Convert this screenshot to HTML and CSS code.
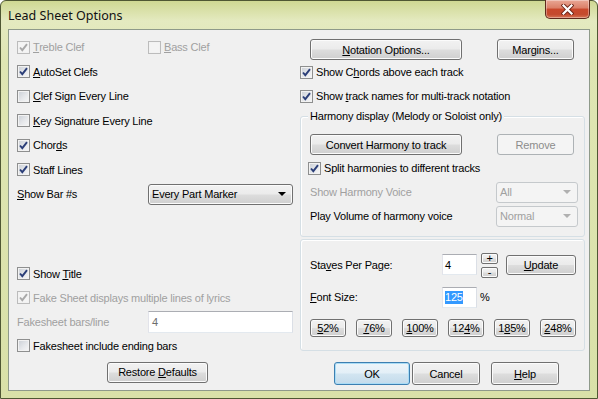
FILE: index.html
```html
<!DOCTYPE html>
<html lang="en">
<head>
    <meta charset="UTF-8">
    <title>Lead Sheet Options</title>
    <link rel="stylesheet" href="styles.css">
</head>
<body>
<div class="window">
    <div class="titlebar">
        <span class="title">Lead Sheet Options</span>
        <div class="close">
            <svg width="13" height="11" viewBox="0 0 13 11">
                <path d="M2.5 1.5 L10.5 9.5 M10.5 1.5 L2.5 9.5" stroke="#6b2416" stroke-width="4" stroke-linecap="square"/>
                <path d="M2.5 1.5 L10.5 9.5 M10.5 1.5 L2.5 9.5" stroke="#fff" stroke-width="2.2" stroke-linecap="square"/>
            </svg>
        </div>
    </div>

    <div class="client">
        <!-- left side: clefs, chords, fakesheet -->
        <div class="col-left">
            <div class="upper">
                <div class="row">
                    <label class="check off first"><span class="box"><svg class="tick" viewBox="0 0 11 11"><path d="M2 5.5 L4.3 8.2 L9 2.2"/></svg></span><span><u>T</u>reble Clef</span></label>
                    <label class="check off"><span class="box"></span><span><u>B</u>ass Clef</span></label>
                </div>
                <div class="row">
                    <label class="check"><span class="box"><svg class="tick" viewBox="0 0 11 11"><path d="M2 5.5 L4.3 8.2 L9 2.2"/></svg></span><span><u>A</u>utoSet Clefs</span></label>
                </div>
                <div class="row">
                    <label class="check"><span class="box"></span><span><u>C</u>lef Sign Every Line</span></label>
                </div>
                <div class="row">
                    <label class="check"><span class="box"></span><span><u>K</u>ey Signature Every Line</span></label>
                </div>
                <div class="row">
                    <label class="check"><span class="box"><svg class="tick" viewBox="0 0 11 11"><path d="M2 5.5 L4.3 8.2 L9 2.2"/></svg></span><span>Chor<u>d</u>s</span></label>
                </div>
                <div class="row">
                    <label class="check"><span class="box"><svg class="tick" viewBox="0 0 11 11"><path d="M2 5.5 L4.3 8.2 L9 2.2"/></svg></span><span>Staff Lines</span></label>
                </div>
                <div class="row">
                    <span class="field-label first"><u>S</u>how Bar #s</span>
                    <div class="combo wide"><span>Every Part Marker</span><span class="arrow"></span></div>
                </div>
            </div>

            <div class="lower">
                <div class="row short">
                    <label class="check"><span class="box"><svg class="tick" viewBox="0 0 11 11"><path d="M2 5.5 L4.3 8.2 L9 2.2"/></svg></span><span>Show <u>T</u>itle</span></label>
                </div>
                <div class="row short">
                    <label class="check off"><span class="box"><svg class="tick" viewBox="0 0 11 11"><path d="M2 5.5 L4.3 8.2 L9 2.2"/></svg></span><span>Fake Sheet displays multiple lines of lyrics</span></label>
                </div>
                <div class="row short">
                    <span class="field-label first off">Fakesheet bars/line</span>
                    <div class="edit wide off">4</div>
                </div>
                <div class="row short">
                    <label class="check"><span class="box"></span><span>Fakesheet include ending bars</span></label>
                </div>
                <button class="btn restore">Restore <u>D</u>efaults</button>
            </div>
        </div>

        <!-- right side: notation, harmony, page size -->
        <div class="col-right">
            <div class="top-buttons">
                <button class="btn notation"><u>N</u>otation Options...</button>
                <button class="btn margins">Margins...</button>
            </div>
            <div class="row short">
                <label class="check"><span class="box"><svg class="tick" viewBox="0 0 11 11"><path d="M2 5.5 L4.3 8.2 L9 2.2"/></svg></span><span>Show C<u>h</u>ords above each track</span></label>
            </div>
            <div class="row short">
                <label class="check"><span class="box"><svg class="tick" viewBox="0 0 11 11"><path d="M2 5.5 L4.3 8.2 L9 2.2"/></svg></span><span>Show <u>t</u>rack names for multi-track notation</span></label>
            </div>

            <div class="group harmony">
                <span class="legend">Harmony display (Melody or Soloist only)</span>
                <div class="group-buttons">
                    <button class="btn notation convert">Convert Harmony to track</button>
                    <button class="btn margins" disabled>Remove</button>
                </div>
                <div class="row short split">
                    <label class="check"><span class="box"><svg class="tick" viewBox="0 0 11 11"><path d="M2 5.5 L4.3 8.2 L9 2.2"/></svg></span><span>Split harmonies to different tracks</span></label>
                </div>
                <div class="row short">
                    <span class="field-label voice off">Show Harmony Voice</span>
                    <div class="combo small off"><span>All</span><span class="arrow"></span></div>
                </div>
                <div class="row short">
                    <span class="field-label voice">Play Volume of harmony voice</span>
                    <div class="combo small off"><span>Normal</span><span class="arrow"></span></div>
                </div>
            </div>

            <div class="group pages">
                <div class="staves">
                    <span class="field-label size">Sta<u>v</u>es Per Page:</span>
                    <div class="edit num">4</div>
                    <div class="spin">
                        <button class="btn spin-btn">+</button>
                        <button class="btn spin-btn">-</button>
                    </div>
                    <button class="btn update"><u>U</u>pdate</button>
                </div>
                <div class="font-size">
                    <span class="field-label size"><u>F</u>ont Size:</span>
                    <div class="edit num"><span class="selected">125</span></div>
                    <span class="percent">%</span>
                </div>
                <div class="presets">
                    <button class="btn preset"><u>5</u>2%</button>
                    <button class="btn preset"><u>7</u>6%</button>
                    <button class="btn preset"><u>1</u>00%</button>
                    <button class="btn preset">12<u>4</u>%</button>
                    <button class="btn preset">1<u>8</u>5%</button>
                    <button class="btn preset"><u>2</u>48%</button>
                </div>
            </div>

            <div class="dialog-buttons">
                <button class="btn big default">OK</button>
                <button class="btn big cancel">Cancel</button>
                <button class="btn big help"><u>H</u>elp</button>
            </div>
        </div>
    </div>
</div>
</body>
</html>
```

FILE: styles.css
```css
* {
    box-sizing: border-box;
}

body {
    margin: 0;
    width: 598px;
    height: 399px;
    overflow: hidden;
    font-family: "Liberation Sans", Arial, sans-serif;
    font-size: 11px;
    letter-spacing: -0.2px;
    color: #000;
}

u {
    text-decoration: underline;
    text-underline-offset: 1px;
}

/* window frame */
.window {
    width: 598px;
    height: 399px;
    border: 1px solid #4f5733;
    border-radius: 6px 6px 0 0;
    padding: 0 7px 7px 7px;
    background: linear-gradient(#cfd893 0px, #e4eac0 20px, #dfe6b3 60px, #d9e1a8 100%);
    display: flex;
    flex-direction: column;
}

.titlebar {
    height: 28px;
    display: flex;
    justify-content: space-between;
    align-items: center;
}

.title {
    font-family: "Noto Sans", "Open Sans", sans-serif;
    font-size: 12.5px;
    letter-spacing: 0;
    color: #111;
}

.close {
    align-self: flex-start;
    width: 45px;
    height: 19px;
    margin-top: -1px;
    border: 1px solid #5e2a1c;
    border-top: none;
    border-radius: 0 0 5px 5px;
    background: linear-gradient(#e9a795 0%, #db7f68 45%, #c9482c 50%, #c44a2e 80%, #d67656 100%);
    box-shadow: inset 0 0 0 1px rgba(255, 255, 255, 0.35);
    display: flex;
    align-items: center;
    justify-content: center;
}

.client {
    flex: 1;
    border: 1px solid #8e9a8a;
    background: #f0f0f0;
    display: flex;
}

/* columns */
.col-left {
    width: 291px;
    padding-left: 8px;
    display: flex;
    flex-direction: column;
}

.upper {
    padding-top: 5px;
}

.lower {
    margin-top: 55px;
}

.col-right {
    width: 285px;
}

.row {
    height: 24.5px;
    display: flex;
    align-items: center;
}

.row.short {
    height: 24px;
}

.first {
    width: 131px;
}

.field-label {
    white-space: nowrap;
}

.off {
    color: #a0a0a0;
}

/* checkboxes */
.check {
    display: flex;
    align-items: center;
    white-space: nowrap;
}

.box {
    width: 13px;
    height: 13px;
    margin-right: 3px;
    border: 1px solid #8e8f8f;
    background: linear-gradient(135deg, #c9ced5 0%, #e6e8eb 55%, #f7f7f7 100%);
    box-shadow: inset 0 0 0 1px #f2f2f2;
    display: flex;
    align-items: center;
    justify-content: center;
    flex-shrink: 0;
}

.tick {
    width: 11px;
    height: 11px;
}

.tick path {
    fill: none;
    stroke: #2b3e78;
    stroke-width: 1.9;
}

.check.off .box {
    border-color: #bcbcbc;
    background: #f4f4f4;
}

.check.off .tick path {
    stroke: #a8a8a8;
}

/* push buttons */
.btn {
    display: block;
    font: inherit;
    letter-spacing: inherit;
    color: #000;
    text-align: center;
    padding: 0;
    border: 1px solid #707070;
    border-radius: 3px;
    background: linear-gradient(#f2f2f2 0%, #ebebeb 48%, #dddddd 52%, #cfcfcf 100%);
    box-shadow: inset 0 0 0 1px #fbfbfb;
    height: 21px;
}

.btn:disabled {
    color: #8c8c8c;
    border-color: #adb2b5;
    background: #f4f4f4;
    box-shadow: none;
}

.restore {
    width: 101px;
    margin: 4px 0 0 90px;
}

.top-buttons,
.group-buttons {
    display: flex;
    margin-top: 9px;
}

.notation {
    width: 152px;
    margin-left: 10px;
}

.margins {
    width: 77px;
    margin-left: 35px;
}

.group-buttons {
    margin-top: 11px;
}

.convert {
    margin-left: 9px;
}

.group-buttons .margins {
    margin-left: 35px;
}

/* group boxes */
.group {
    border: 1px solid #d5dfe5;
    border-radius: 3px;
    box-shadow: inset 1px 1px #fff;
}

.harmony {
    margin-top: 8px;
    padding-bottom: 8px;
}

.legend {
    display: block;
    width: fit-content;
    margin: -8px 0 0 7px;
    padding: 0 2px;
    line-height: 14px;
    background: #f0f0f0;
}

.split {
    margin-top: 1px;
    padding-left: 7px;
}

.voice {
    width: 195px;
    padding-left: 9px;
}

/* combos and edits */
.combo {
    height: 21px;
    border: 1px solid #707070;
    border-radius: 3px;
    background: linear-gradient(#f2f2f2 0%, #ebebeb 48%, #dddddd 52%, #cfcfcf 100%);
    box-shadow: inset 0 0 0 1px #fbfbfb;
    display: flex;
    align-items: center;
    padding-left: 3px;
}

.combo.wide {
    width: 145px;
}

.combo.small {
    width: 82px;
}

.combo.off {
    border-color: #c5c9cc;
    background: #f4f4f4;
    box-shadow: none;
}

.arrow {
    margin-left: auto;
    margin-right: 6px;
    width: 0;
    height: 0;
    border-left: 4px solid transparent;
    border-right: 4px solid transparent;
    border-top: 4px solid #000;
}

.combo.off .arrow {
    border-top-color: #b0b0b0;
}

.edit {
    height: 22px;
    border: 1px solid #abadb3;
    border-left-color: #e2e3ea;
    border-right-color: #dbdfe6;
    border-bottom-color: #e3e9ef;
    background: #fff;
    display: flex;
    align-items: center;
    padding-left: 3px;
}

.edit.wide {
    width: 145px;
    color: #6d6d6d;
}

.edit.num {
    width: 35px;
    height: 21px;
    padding-left: 2px;
}

.selected {
    background: #3399ff;
    color: #fff;
    line-height: 13px;
}

/* staves / font size */
.pages {
    margin-top: 2px;
    padding: 13px 0 13px 9px;
}

.staves,
.font-size {
    display: flex;
    align-items: flex-start;
}

.size {
    width: 132px;
    line-height: 24px;
}

.staves .edit {
    margin-top: 1px;
}

.spin {
    margin-left: 4px;
    display: flex;
    flex-direction: column;
    gap: 3px;
}

.spin-btn {
    width: 17px;
    height: 11px;
    font-size: 11px;
    line-height: 9px;
    border-radius: 2px;
}

.update {
    width: 70px;
    height: 20px;
    margin: 2px 0 0 8px;
}

.font-size {
    margin-top: 7px;
    align-items: center;
}

.percent {
    margin-left: 3px;
}

.presets {
    display: flex;
    gap: 10px;
    margin-top: 10px;
}

.preset {
    width: 36px;
    height: 18px;
}

.dialog-buttons {
    display: flex;
    margin: 11px 0 0 34px;
}

.big {
    height: 23px;
    width: 68px;
}

.default {
    width: 76px;
    border-color: #3c7fb1;
    background: linear-gradient(#edf5fa 0%, #e3eff7 48%, #d2e5f1 52%, #c4dbeb 100%);
    box-shadow: inset 0 0 0 1px #a9dcf6;
}

.cancel {
    margin-left: 2px;
}

.help {
    margin-left: 11px;
}
```
